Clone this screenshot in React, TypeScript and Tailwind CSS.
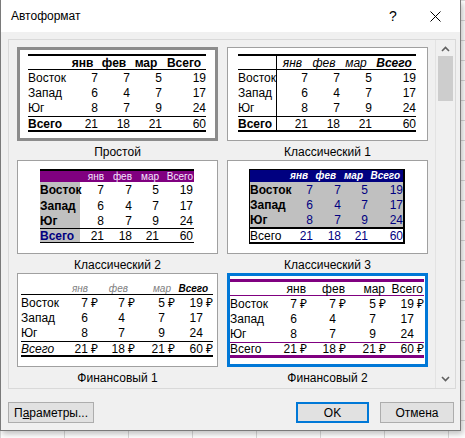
import type { ReactNode } from 'react';

const DATA: [string, number, number, number, number][] = [
  ['Восток', 7, 7, 5, 19],
  ['Запад', 6, 4, 7, 17],
  ['Юг', 8, 7, 9, 24],
];
const TOTAL: [string, number, number, number, number] = ['Всего', 21, 18, 21, 60];
const MONTHS = ['янв', 'фев', 'мар', 'Всего'];

// рубль; у строк без знака он невидим, чтобы цифры стояли ровно
function Rub({ v, show }: { v: number; show: boolean }) {
  return (
    <>
      {v}
      <span className={`font-['Noto_Sans',sans-serif] ${show ? '' : 'invisible'}`}>{'\u00a0₽'}</span>
    </>
  );
}

function Thumb({ label, frame, children }: { label: string; frame: string; children: ReactNode }) {
  return (
    <div className="flex flex-col">
      <div className={`h-[94px] w-[201px] overflow-hidden bg-white ${frame}`}>{children}</div>
      <div className="flex h-[19px] items-center justify-center pt-[2px] text-[12px]">{label}</div>
    </div>
  );
}

function Simple() {
  const hs = ['h-[15px]', 'h-[15px]', 'h-[16px]'];
  return (
    <div className="ml-[8px] mt-[4px] w-[178px] border-y-2 border-black text-[12px] leading-none">
      <div className="grid h-[14px] grid-cols-[39px_31px_32px_32px_44px] items-center border-b border-black font-bold">
        <div />
        {MONTHS.map((m) => (
          <div key={m} className="text-center">{m}</div>
        ))}
      </div>
      {DATA.map((r, i) => (
        <div key={r[0]} className={`grid grid-cols-[39px_31px_32px_32px_44px] items-center ${hs[i]}`}>
          <div>{r[0]}</div>
          {r.slice(1).map((v, j) => (
            <div key={j} className="text-right">{v}</div>
          ))}
        </div>
      ))}
      <div className="grid h-[14px] grid-cols-[39px_31px_32px_32px_44px] items-center border-t border-black font-bold">
        <div>{TOTAL[0]}</div>
        {TOTAL.slice(1).map((v, j) => (
          <div key={j} className="text-right font-normal">{v}</div>
        ))}
      </div>
    </div>
  );
}

function Classic1() {
  const hs = ['h-[15px]', 'h-[15px]', 'h-[16px]'];
  return (
    <div className="ml-[10px] mt-[6px] w-[178px] border-y-2 border-black text-[12px] leading-none">
      <div className="grid h-[14px] grid-cols-[39px_31px_32px_32px_44px] items-center border-b border-black italic">
        <div className="h-full border-r border-black" />
        {MONTHS.map((m, j) => (
          <div key={m} className={`text-center ${j === 3 ? 'font-bold' : ''}`}>{m}</div>
        ))}
      </div>
      {DATA.map((r, i) => (
        <div key={r[0]} className={`grid grid-cols-[39px_31px_32px_32px_44px] items-center ${hs[i]}`}>
          <div className="flex h-full items-center border-r border-black">{r[0]}</div>
          {r.slice(1).map((v, j) => (
            <div key={j} className="text-right">{v}</div>
          ))}
        </div>
      ))}
      <div className="grid h-[14px] grid-cols-[39px_31px_32px_32px_44px] items-center border-t border-black">
        <div className="flex h-full items-center border-r border-black font-bold">{TOTAL[0]}</div>
        {TOTAL.slice(1).map((v, j) => (
          <div key={j} className="text-right">{v}</div>
        ))}
      </div>
    </div>
  );
}

function Classic2() {
  const hs = ['h-[16px]', 'h-[15px]', 'h-[15px]'];
  return (
    <div className="ml-[22px] mt-[8px] w-[154px] border-t-2 border-b border-black text-[12px] leading-none">
      <div className="grid h-[11px] grid-cols-[40px_25px_28px_27px_34px] items-center bg-[#800080] text-[10px] text-[#f6e6ff]">
        <div />
        {MONTHS.map((m) => (
          <div key={m} className="pr-[1px] text-right">{m}</div>
        ))}
      </div>
      {DATA.map((r, i) => (
        <div key={r[0]} className={`grid grid-cols-[40px_25px_28px_27px_34px] items-center ${hs[i]}`}>
          <div className="flex h-full items-center bg-[#c0c0c0] font-bold">{r[0]}</div>
          {r.slice(1).map((v, j) => (
            <div key={j} className="pr-[1px] text-right">{v}</div>
          ))}
        </div>
      ))}
      <div className="grid h-[14px] grid-cols-[40px_25px_28px_27px_34px] items-center border-t border-black">
        <div className="flex h-full items-center bg-[#c0c0c0] font-bold text-[#000080]">{TOTAL[0]}</div>
        {TOTAL.slice(1).map((v, j) => (
          <div key={j} className="pr-[1px] text-right">{v}</div>
        ))}
      </div>
    </div>
  );
}

function Classic3() {
  return (
    <div className="ml-[21px] mt-[8px] w-[156px] border-t border-r-2 border-b-2 border-l border-black text-[12px] leading-none">
      <div className="grid h-[12px] grid-cols-[39px_24px_28px_27px_35px] items-center bg-[#000080] text-[10px] font-bold italic text-white">
        <div />
        {MONTHS.map((m, j) => (
          <div key={m} className={`text-right ${j === 3 ? 'pr-[3px]' : 'pr-[5px]'}`}>{m}</div>
        ))}
      </div>
      <div className="border-b-2 border-black bg-[#c0c0c0]">
        {DATA.map((r) => (
          <div key={r[0]} className="grid h-[15px] grid-cols-[39px_24px_28px_27px_35px] items-center">
            <div className="font-bold">{r[0]}</div>
            {r.slice(1).map((v, j) => (
              <div key={j} className="text-right text-[#000080]">{v}</div>
            ))}
          </div>
        ))}
      </div>
      <div className="grid h-[13px] grid-cols-[39px_24px_28px_27px_35px] items-center bg-white">
        <div>{TOTAL[0]}</div>
        {TOTAL.slice(1).map((v, j) => (
          <div key={j} className="text-right text-[#000080]">{v}</div>
        ))}
      </div>
    </div>
  );
}

function Finance1() {
  const hs = ['h-[15px]', 'h-[15px]', 'h-[16px]'];
  const hp = ['pr-[10px]', 'pr-[7px]', 'pr-[4px]', 'pr-[5px]'];
  return (
    <div className="ml-[3px] mt-[9px] w-[192px] border-b-2 border-black text-[12px] leading-none">
      <div className="grid h-[12px] grid-cols-[45px_32px_37px_40px_38px] items-center border-b border-black text-[10px] italic text-[#808080]">
        <div />
        {MONTHS.map((m, j) => (
          <div key={m} className={`text-right ${hp[j]} ${j === 3 ? 'font-bold text-black' : ''}`}>{m}</div>
        ))}
      </div>
      {DATA.map((r, i) => (
        <div key={r[0]} className={`grid grid-cols-[45px_32px_37px_40px_38px] items-center ${hs[i]}`}>
          <div>{r[0]}</div>
          {r.slice(1).map((v, j) => (
            <div key={j} className="text-right">
              <Rub v={v as number} show={i === 0} />
            </div>
          ))}
        </div>
      ))}
      <div className="grid h-[14px] grid-cols-[45px_32px_37px_40px_38px] items-center border-t border-black">
        <div className="italic">{TOTAL[0]}</div>
        {TOTAL.slice(1).map((v, j) => (
          <div key={j} className="text-right">
            <Rub v={v as number} show />
          </div>
        ))}
      </div>
    </div>
  );
}

function Finance2() {
  const hs = ['h-[15px]', 'h-[15px]', 'h-[16px]'];
  return (
    <div className="mt-[3px] w-[194px] border-y-[3px] border-[#800080] text-[12px] leading-none">
      <div className="grid h-[14px] grid-cols-[40px_37px_39px_40px_38px] items-center border-b border-[#800080]">
        <div />
        {MONTHS.map((m) => (
          <div key={m} className="pr-[1px] text-right">{m}</div>
        ))}
      </div>
      {DATA.map((r, i) => (
        <div key={r[0]} className={`grid grid-cols-[40px_37px_39px_40px_38px] items-center ${hs[i]}`}>
          <div>{r[0]}</div>
          {r.slice(1).map((v, j) => (
            <div key={j} className="text-right">
              <Rub v={v as number} show={i === 0} />
            </div>
          ))}
        </div>
      ))}
      <div className="grid h-[13px] grid-cols-[40px_37px_39px_40px_38px] items-center border-t border-[#800080]">
        <div>{TOTAL[0]}</div>
        {TOTAL.slice(1).map((v, j) => (
          <div key={j} className="text-right">
            <Rub v={v as number} show />
          </div>
        ))}
      </div>
    </div>
  );
}

function Chevron({ down }: { down?: boolean }) {
  return (
    <svg width="9" height="6" viewBox="0 0 9 6" className={down ? 'rotate-180' : ''}>
      <polyline points="1,5 4.5,1.5 8,5" fill="none" stroke="#606060" strokeWidth="1.6" />
    </svg>
  );
}

export default function App() {
  return (
    <div className="h-[438px] w-[465px] overflow-hidden bg-white bg-[linear-gradient(to_right,#d9d9d9_1px,transparent_1px),linear-gradient(to_bottom,#d9d9d9_1px,transparent_1px)] bg-[size:64px_20px] font-['Liberation_Sans',Arial,sans-serif] text-black">
      <div className="flex h-[431px] w-[461px] flex-col border-x border-b border-[#7a7a7a] bg-[#f0f0f0] shadow-[2px_3px_6px_rgba(0,0,0,0.25)]">
        <div className="flex h-[32px] items-center bg-white">
          <span className="pl-[10px] text-[12px]">Автоформат</span>
          <div className="ml-auto flex pr-[4px]">
            <div className="flex h-[32px] w-[42px] items-center justify-center text-[14px]">?</div>
            <div className="flex h-[32px] w-[42px] items-center justify-center">
              <svg width="11" height="11" viewBox="0 0 11 11">
                <path d="M0.5 0.5 L10.5 10.5 M10.5 0.5 L0.5 10.5" stroke="#000" strokeWidth="1" />
              </svg>
            </div>
          </div>
        </div>

        <div className="flex flex-1 flex-col pl-[7px] pr-[4px] pt-[7px]">
          <div className="flex h-[350px] border border-[#d9d9d9]">
            <div className="h-full w-[427px] overflow-hidden border-r border-[#e3e3e3]">
              <div className="grid grid-cols-[201px_201px] gap-x-[9px] pl-[8px] pt-[7px]">
                <Thumb label="Простой" frame="border-[3px] border-[#8c8c8c]">
                  <Simple />
                </Thumb>
                <Thumb label="Классический 1" frame="border border-[#a0a0a0]">
                  <Classic1 />
                </Thumb>
                <Thumb label="Классический 2" frame="border border-[#a0a0a0]">
                  <Classic2 />
                </Thumb>
                <Thumb label="Классический 3" frame="border border-[#a0a0a0]">
                  <Classic3 />
                </Thumb>
                <Thumb label="Финансовый 1" frame="border border-[#a0a0a0]">
                  <Finance1 />
                </Thumb>
                <Thumb label="Финансовый 2" frame="border-[3px] border-[#0078d7]">
                  <Finance2 />
                </Thumb>
              </div>
            </div>
            <div className="flex w-[18px] flex-col items-center">
              <div className="flex h-[16px] items-center justify-center pt-[1px]">
                <Chevron />
              </div>
              <div className="h-[45px] w-[15px] bg-[#cdcdcd]" />
              <div className="flex-1" />
              <div className="flex h-[16px] items-center justify-center pb-[3px]">
                <Chevron down />
              </div>
            </div>
          </div>

          <div className="mt-[13px] flex items-center pr-[2px] text-[12px]">
            <button className="h-[21px] w-[86px] border border-[#adadad] bg-[#e1e1e1]">
              П<span className="underline">а</span>раметры...
            </button>
            <button className="ml-auto h-[21px] w-[73px] border-2 border-[#0078d7] bg-[#e1e1e1]">OK</button>
            <button className="ml-[11px] h-[21px] w-[74px] border border-[#adadad] bg-[#e1e1e1]">Отмена</button>
          </div>
        </div>
      </div>
    </div>
  );
}
